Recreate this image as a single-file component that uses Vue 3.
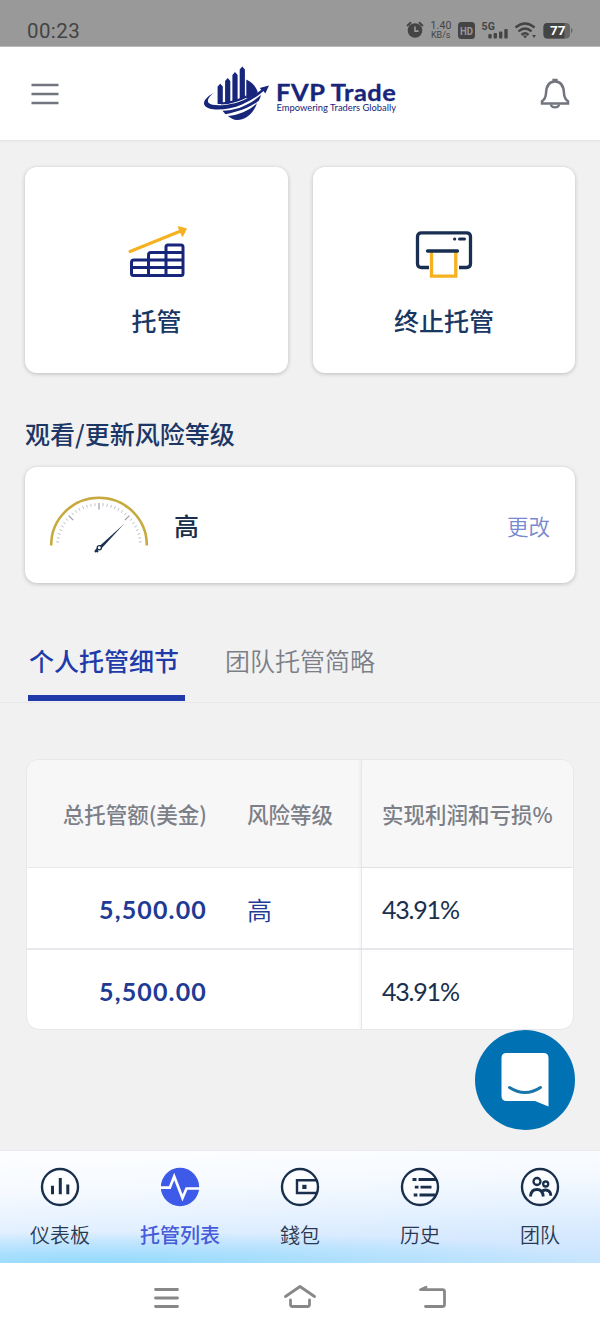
<script setup>
const rows = [
  { amount: '5,500.00', risk: '高', profit: '43.91%' },
  { amount: '5,500.00', risk: '', profit: '43.91%' },
]

const tabs = [
  { id: 'dashboard', label: '仪表板' },
  { id: 'trust', label: '托管列表', active: true },
  { id: 'wallet', label: '錢包' },
  { id: 'history', label: '历史' },
  { id: 'team', label: '团队' },
]

// Gauge ticks sweep the upper half of the dial; every eighth one is longer.
const ticks = Array.from({ length: 33 }, (_, i) => {
  const angle = Math.PI - (i * Math.PI) / 32
  const long = i === 8 || i === 16 || i === 24
  const inner = long ? 36.5 : 40
  const cos = Math.cos(angle)
  const sin = Math.sin(angle)
  return {
    x1: 50 + inner * cos,
    y1: 50 - inner * sin,
    x2: 50 + 43 * cos,
    y2: 50 - 43 * sin,
    long,
  }
}).slice(1, -1)
</script>

<template>
  <div class="screen">
    <div class="status">
      <span class="clock">00:23</span>
      <svg class="indicators" width="170" height="24" viewBox="0 0 170 24">
        <g fill="#444">
          <circle cx="10" cy="13.500" r="7.300" />
          <path d="M2.600 8.400 5.500 5.800M17.400 8.400 14.500 5.800" stroke="#444" stroke-width="2" stroke-linecap="round" />
          <path d="M10 9.500v4.600h3.600" fill="none" stroke="#999" stroke-width="1.600" />
          <text x="25.500" y="12" font-size="10.500" textLength="21">1.40</text>
          <text x="26" y="21" font-size="9" textLength="19.500">KB/s</text>
          <rect x="53" y="5" width="17" height="17" rx="3.500" />
          <text x="55" y="17.500" font-size="11" font-weight="700" fill="#999" textLength="13" lengthAdjust="spacingAndGlyphs">HD</text>
          <text x="76.500" y="13" font-size="10.500" font-weight="700" textLength="13.500">5G</text>
          <rect x="83.300" y="17" width="3.400" height="4.500" rx="1" />
          <rect x="88.600" y="16" width="3.400" height="5.500" rx="1" />
          <rect x="94" y="14.500" width="3.400" height="7" rx="1" />
          <rect x="99.300" y="12" width="3.400" height="9.500" rx="1" />
          <g fill="none" stroke="#444" stroke-width="2.300">
            <path d="M110.500 10.500Q120 2.500 129.600 10.500" />
            <path d="M113.500 14.300Q120 8.600 126.600 14.300" />
            <path d="M116.500 17.800Q120 14.800 123.600 17.800" />
          </g>
          <path d="M117.800 18.500h4.600l-2.300 3zM127 18h4l-2 3z" />
          <rect x="138.500" y="6" width="26.500" height="15.500" rx="4" fill="#666" />
          <path d="M142.500 6h17v15.500h-17a4 4 0 0 1-4-4V10a4 4 0 0 1 4-4z" />
          <path d="M166 10.500q3 3 0 6z" fill="#666" />
          <text x="145" y="18.300" font-size="13.500" font-weight="700" fill="#fff" textLength="15.500">77</text>
        </g>
      </svg>
    </div>

    <header class="header">
      <svg class="menu" width="28" height="24" viewBox="0 0 28 24">
        <path d="M.5 3h27M.5 12h27M.5 21h27" stroke="#72757e" stroke-width="2.400" />
      </svg>
      <svg class="logo" width="196" height="56" viewBox="0 0 196 56">
        <g fill="#17257a">
          <path d="M13.600 38V20.500l2.600-2.700 2.600 2.700V38zM21.100 38V15l2.600-3 2.600 3v22zM28.400 36V9l2.600-3 2.600 3v25.500zM35.700 33.500V3.500l2.600-3 2.600 3v27z" />
          <path d="M42.300 13.500c6 2.700 10 7.300 11.500 13-3.500 3-7.500 5-11.500 6.300z" />
          <path d="M10.500 26.500C2 31 -1 35.500 .3 38.800 4 46 24 44.500 38 38.500c9-4 16-8.500 21.500-13.500l1.800 2.600 3.700-8-9.300 2.500 1.600 1.600c-5.500 4.300-11.500 7.800-18 10.600C29 39 9 41.500 4.500 36.800c-2-2.800 1-7 6-10.300z" />
          <path d="M18.500 44.800c13-.5 25-4.300 38.500-15.800-.5 2.200-1.200 4-2.200 5.800C47 41 36 45.500 21.500 48.200z" />
          <path d="M24 50c11-1.200 21.500-5.500 29-13C50 47 42 54 33 54c-3.500-.1-6.500-1.700-9-4z" />
        </g>
        <path d="M17 37.500c9-.5 18-3 25.500-7" fill="none" stroke="#17257a" stroke-width="2" />
        <text class="brand" x="72" y="34.500" textLength="120.500" lengthAdjust="spacingAndGlyphs">FVP Trade</text>
        <text class="slogan" x="72.500" y="45.300" textLength="119.500" lengthAdjust="spacingAndGlyphs">Empowering Traders Globally</text>
      </svg>
      <svg class="bell" width="30" height="32" viewBox="0 0 30 32" fill="none" stroke="#72757e" stroke-width="2.300">
        <path d="M2 25.600v-2.400c3.300-2 3.700-4 4-7.800C6.300 8 8.500 3.500 15 3.500s8.700 4.500 9 11.900c.3 3.800.7 5.800 4 7.800v2.400z" stroke-width="2.500" />
        <path d="M13.500 3V2h3v1M10.800 26.500c.8 3.700 7.600 3.700 8.400 0" />
      </svg>
    </header>

    <main class="content">
      <div class="actions">
        <div class="card action">
          <svg width="60" height="54" viewBox="0 0 60 54" fill="none">
            <path d="M3 27.500 55 6.500" stroke="#f5b11f" stroke-width="3" stroke-linecap="round" />
            <path d="M51.500 3 59 5 55.500 12z" fill="#f5b11f" stroke="#f5b11f" stroke-width="1.500" stroke-linejoin="round" />
            <g stroke="#17257a" stroke-width="3" stroke-linejoin="round">
              <path d="M21.500 36H7q-2.500 0-2.500 2.500v11q0 2 2 2H54q2 0 2-2V23q0-2-2-2H41q-2 0-2 2v5.500H24q-2.500 0-2.500 2.500v20.500M39 28v23.500M4.500 43.500H56M21.500 36H56M39 28.500h17" />
            </g>
          </svg>
          <span>托管</span>
        </div>
        <div class="card action">
          <svg width="60" height="54" viewBox="0 0 60 54" fill="none">
            <path d="M15 43.500H7.500q-4 0-4-4V12.800q0-4 4-4h45q4 0 4 4v26.700q0 4-4 4H45" stroke="#192f52" stroke-width="3.300" />
            <path d="M17.500 27.500v24.700H41.800V27.500" stroke="#f5b11f" stroke-width="3.300" />
            <path d="M13.500 27h30" stroke="#192f52" stroke-width="3.300" stroke-linecap="round" />
            <path d="M40.500 15h.3M45.500 15h5" stroke="#192f52" stroke-width="3" stroke-linecap="round" />
          </svg>
          <span>终止托管</span>
        </div>
      </div>

      <h2 class="title">观看/更新风险等级</h2>
      <section class="card risk">
        <svg width="100" height="58" viewBox="0 0 100 58">
          <path d="M2.200 49.500V49a47.800 47.300 0 0 1 95.600 0v.5" fill="none" stroke="#c7aa3f" stroke-width="2.600" />
          <line
            v-for="(t, i) in ticks"
            :key="i"
            :x1="t.x1"
            :y1="t.y1"
            :x2="t.x2"
            :y2="t.y2"
            :class="t.long ? 'tick long' : 'tick'"
          />
          <path d="M49.500 51 75 28 52 53z" fill="#192f52" />
          <path d="m48.500 53-2.500 3M46.500 53.500l2.500 2.500" stroke="#192f52" stroke-width="2" />
          <circle cx="50.300" cy="51.800" r="2.100" fill="#fff" stroke="#192f52" stroke-width="1.300" />
        </svg>
        <span class="level">高</span>
        <a class="change">更改</a>
      </section>

      <nav class="sections">
        <span class="section current">个人托管细节</span>
        <span class="section">团队托管简略</span>
      </nav>

      <div class="table">
        <div class="row head">
          <span class="amount">总托管额(美金)</span>
          <span class="grade">风险等级</span>
          <span class="profit">实现利润和亏损%</span>
        </div>
        <div v-for="(row, i) in rows" :key="i" class="row">
          <span class="amount">{{ row.amount }}</span>
          <span class="grade">{{ row.risk }}</span>
          <span class="profit">{{ row.profit }}</span>
        </div>
      </div>
    </main>

    <div class="chat">
      <svg width="100" height="100" viewBox="0 0 100 100">
        <path d="M31.500 23h37q5 0 5 5v48.500L60 71H31.500q-5 0-5-5V28q0-5 5-5z" fill="#fff" />
        <path d="M34.500 57.500q15.500 10 31 0" fill="none" stroke="#1a75a8" stroke-width="3" stroke-linecap="round" />
      </svg>
    </div>

    <nav class="tabbar">
      <div v-for="tab in tabs" :key="tab.id" :class="['tab', { active: tab.active }]">
        <svg width="40" height="40" viewBox="0 0 40 40" fill="none" stroke="#192f4c" stroke-width="2.400">
          <circle v-if="tab.active" cx="20" cy="20" r="19.200" fill="#3d5be8" stroke="none" />
          <circle v-else cx="20" cy="20" r="18" fill="#fff" fill-opacity=".65" />
          <path v-if="tab.id === 'dashboard'" d="M12.500 27.300v-8.600M20.300 27.300V11M27.800 27.300V17.500" stroke-width="3" />
          <path v-if="tab.id === 'trust'" d="M0 20.700h9.800L14.200 9.500l8.300 21.500 4-9.500H40" stroke="#fff" stroke-width="2.700" />
          <template v-if="tab.id === 'wallet'">
            <path d="M36.500 13.300H17V26h19.500" />
            <rect x="22.300" y="17.800" width="4.200" height="4.200" fill="#192f4c" stroke="none" />
          </template>
          <path v-if="tab.id === 'history'" d="M12.500 12.500h4M18.500 12.500h18M14.800 20.200h3.700M20.500 20.200h11M13.700 28h3.700M19.500 28h16" stroke-width="2.800" />
          <g v-if="tab.id === 'team'" stroke-width="2.300">
            <circle cx="17" cy="14.500" r="3.500" />
            <circle cx="25.700" cy="17" r="2.500" />
            <path d="M10.500 29.500c.3-5 3.200-7 6.500-7 2.800 0 5.800 1.500 6.300 7M22.500 23.700c4.500-2 8.300.5 8.300 5" stroke-width="2.800" />
          </g>
        </svg>
        <span>{{ tab.label }}</span>
      </div>
    </nav>

    <div class="system">
      <svg width="34" height="26" viewBox="0 0 34 26"><path d="M5.500 4.500h22M5.500 13h22M5.500 21.500h22" /></svg>
      <svg width="34" height="26" viewBox="0 0 34 26"><path d="M2.500 11.500 17 1.500l14.500 10M7.500 15v4.500q0 2 2 2h15q2 0 2-2V15" /></svg>
      <svg width="34" height="26" viewBox="0 0 34 26"><path d="M10 2.200 4.500 4.700H26.500q2 0 2 2v12.800q0 2-2 2H9.500" /></svg>
    </div>
  </div>
</template>

<style>
body {
  margin: 0;
  background: #f1f1f1;
}
</style>

<style scoped>
.screen {
  position: relative;
  display: flex;
  flex-direction: column;
  width: 600px;
  height: 1333px;
  overflow: hidden;
  background: #f1f1f1;
  font-family: "Noto Sans CJK SC", sans-serif;
}
svg {
  display: block;
  flex: none;
}
.status {
  display: flex;
  justify-content: space-between;
  height: 46px;
  padding: 0 25px 0 27px;
  background: #999;
  border-bottom: 1px solid #bbb;
  color: #444;
  font-family: Roboto, sans-serif;
  box-sizing: content-box;
}
.clock {
  padding-top: 19px;
  font-size: 20.500px;
  line-height: 24px;
  letter-spacing: 0.400px;
}
.indicators {
  margin-top: 17px;
}
.header {
  display: grid;
  grid-template-columns: 1fr 196px 1fr;
  align-items: center;
  height: 93px;
  padding: 0 30px 0 31px;
  background: #fff;
  border-bottom: 1px solid #e5e5e7;
  box-shadow: 0 1px 2px #00000008;
}
.bell {
  justify-self: end;
}
.logo {
  margin-left: 1px;
  overflow: visible;
}
.brand {
  font: 700 22.500px Lato, sans-serif;
  letter-spacing: 0.500px;
  fill: #17257a;
  stroke: #17257a;
  stroke-width: 0.300px;
}
.slogan {
  font: 400 9px Lato, sans-serif;
  fill: #17257a;
}
.content {
  flex: 1;
  padding-top: 26px;
}
.card {
  background: #fff;
  border-radius: 12px;
  box-shadow: 0 1px 4px rgba(0, 0, 0, 0.22);
}
.actions {
  display: grid;
  grid-template-columns: 263px 262px;
  gap: 25px;
  padding: 0 25px;
}
.action {
  display: flex;
  flex-direction: column;
  align-items: center;
  height: 206px;
  color: #193763;
  font-size: 25px;
  font-weight: 500;
  line-height: 36px;
}
.action svg {
  margin: 57px 0 24px;
}
.title {
  height: 38px;
  margin: 41px 25px 15px;
  color: #1c3766;
  font-size: 25px;
  font-weight: 500;
  line-height: 38px;
}
.risk {
  display: flex;
  align-items: center;
  height: 116px;
  margin: 0 25px;
  padding: 0 25px 0 24px;
  box-sizing: border-box;
}
.level {
  margin-left: 25px;
  color: #192f4c;
  font-size: 25px;
  font-weight: 500;
}
.change {
  margin-left: auto;
  color: #7789d0;
  font-size: 21.500px;
  font-weight: 350;
}
.tick {
  stroke: #b0b2ba;
  stroke-width: 0.800;
}
.tick.long {
  stroke: #9a9caa;
  stroke-width: 1.200;
}
.sections {
  display: flex;
  gap: 40px;
  height: 79px;
  margin-top: 40px;
  padding-left: 28px;
  border-bottom: 1px solid #e6e7eb;
}
.section {
  height: 72px;
  padding-left: 1px;
  color: #7c7f87;
  font-size: 25px;
  font-weight: 350;
  line-height: 74px;
}
.section.current {
  width: 156px;
  color: #203aaa;
  font-weight: 500;
  border-bottom: 6px solid #203aaa;
}
.section:not(.current) {
  padding-left: 0;
}
.table {
  width: 548px;
  height: 271px;
  margin: 56px 26px 0;
  border: 1px solid #e7e8ec;
  border-radius: 13px;
  box-sizing: border-box;
  background: #fff;
  overflow: hidden;
}
.row {
  display: grid;
  grid-template-columns: 179px 155px 1fr;
  height: 80px;
  line-height: 83px;
  border-bottom: 2px solid #e8e9ed;
  color: #213a94;
  font-family: Lato, "Noto Sans CJK SC", sans-serif;
  font-size: 25px;
}
.row:last-child {
  border-bottom: 0;
}
.amount {
  text-align: right;
  font-weight: 700;
  letter-spacing: 1.150px;
}
.grade {
  padding-left: 41px;
  font-family: "Noto Sans CJK SC", sans-serif;
  font-weight: 350;
}
.profit {
  padding-left: 20px;
  border-left: 1px solid #e5e6ea;
  box-shadow: -2px 0 3px #00000009;
  color: #192f4c;
  letter-spacing: -1.200px;
}
.row:not(.head) .amount {
  margin-right: -1px;
}
.head {
  height: 107px;
  line-height: 107px;
  border-bottom-width: 1px;
  background: #f7f7f8;
  font-family: "Noto Sans CJK SC", sans-serif;
  font-size: 21.500px;
  font-weight: 500;
}
.head span {
  color: #7c7f87;
  font-weight: 500;
  letter-spacing: 0;
  white-space: nowrap;
}
.head .amount {
  margin-right: -1px;
}
.chat {
  position: absolute;
  left: 475px;
  top: 1030px;
  width: 100px;
  height: 100px;
  border-radius: 50%;
  background: #0072b4;
}
.tabbar {
  display: grid;
  grid-template-columns: repeat(5, 120px);
  height: 112px;
  border-top: 1px solid #e9eaef;
  background:
    radial-gradient(ellipse 85% 28% at 18% 100%, #93dafd 0%, #93dafd00 100%),
    linear-gradient(178deg, #fdfeff 0%, #f6faff 30%, #e6f2ff 55%, #d6e9ff 78%, #c8e5fd 100%);
}
.tab {
  display: flex;
  flex-direction: column;
  align-items: center;
  padding-top: 16px;
  color: #293851;
  font-size: 20px;
  font-weight: 350;
  line-height: 30px;
}
.tab span {
  margin-top: 13px;
}
.tab.active {
  color: #465cda;
  font-weight: 500;
}
.system {
  display: flex;
  justify-content: center;
  gap: 99px;
  height: 70px;
  padding-top: 22px;
  box-sizing: border-box;
  background: #fff;
}
.system path {
  fill: none;
  stroke: #888;
  stroke-width: 2.800;
  stroke-linecap: round;
  stroke-linejoin: round;
}
</style>
